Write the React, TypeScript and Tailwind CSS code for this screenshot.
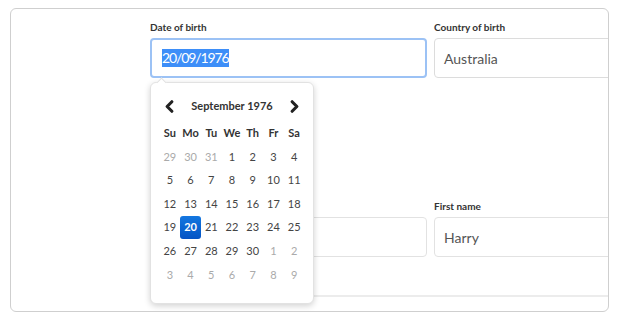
import { ChevronLeft, ChevronRight } from 'lucide-react';

const dayNames = ['Su', 'Mo', 'Tu', 'We', 'Th', 'Fr', 'Sa'];

// [day, inMonth]
const weeks: [number, boolean][][] = [
  [[29, false], [30, false], [31, false], [1, true], [2, true], [3, true], [4, true]],
  [[5, true], [6, true], [7, true], [8, true], [9, true], [10, true], [11, true]],
  [[12, true], [13, true], [14, true], [15, true], [16, true], [17, true], [18, true]],
  [[19, true], [20, true], [21, true], [22, true], [23, true], [24, true], [25, true]],
  [[26, true], [27, true], [28, true], [29, true], [30, true], [1, false], [2, false]],
  [[3, false], [4, false], [5, false], [6, false], [7, false], [8, false], [9, false]],
];

function Field({ label, children }: { label?: string; children: React.ReactNode }) {
  return (
    <div className="flex flex-col">
      <div className="h-[14px] text-[10px] font-bold leading-[14px] text-[#333]">{label}</div>
      <div className="mt-[4px]">{children}</div>
    </div>
  );
}

function DatePicker() {
  return (
    <div className="absolute left-[139px] top-[73px] w-[164px] h-[222px] rounded-[6px] border border-[#e2e2e2] bg-white px-[8.5px] pt-[11px] shadow-[0_2px_6px_rgba(0,0,0,0.18)]">
      {/* caret */}
      <div className="absolute -top-[4px] left-[7px] h-[7px] w-[7px] rotate-45 border-l border-t border-[#e2e2e2] bg-white" />
      <div className="flex h-[24px] items-center justify-between">
        <ChevronLeft size={19} strokeWidth={4} className="text-[#222]" />
        <span className="text-[11px] font-bold text-[#333]">September 1976</span>
        <ChevronRight size={19} strokeWidth={4} className="text-[#222]" />
      </div>
      <div className="mt-[3px] grid h-[24px] grid-cols-7 items-center">
        {dayNames.map((d) => (
          <span key={d} className="text-center text-[11px] font-bold text-[#333]">
            {d}
          </span>
        ))}
      </div>
      {weeks.map((week, wi) => (
        <div key={wi} className="grid h-[23.6px] grid-cols-7 items-center">
          {week.map(([day, inMonth], di) => {
            const selected = inMonth && day === 20;
            return (
              <div key={di} className="flex justify-center">
                {selected ? (
                  <span className="flex h-[23px] w-[22px] items-center justify-center rounded-[3px] bg-gradient-to-b from-[#1477e0] to-[#0553c4] text-[11px] font-bold text-white">
                    {day}
                  </span>
                ) : (
                  <span className={`text-[11px] ${inMonth ? 'text-[#444]' : 'text-[#aaa]'}`}>{day}</span>
                )}
              </div>
            );
          })}
        </div>
      ))}
    </div>
  );
}

export default function App() {
  return (
    <div className="h-[320px] w-[619px] bg-white pl-[10px] pt-[8px]" style={{ fontFamily: 'Lato, "Open Sans", sans-serif' }}>
      <div className="relative h-[304px] w-[599px] overflow-hidden rounded-[6px] border border-[#cfcfcf] bg-white pl-[139px] pt-[11px]">
        <div className="grid w-[561px] grid-cols-[277px_277px] gap-x-[7px]">
          <Field label="Date of birth">
            <div className="flex h-[40px] items-center rounded-[4px] border-2 border-[#9cc2f5] px-[10px]">
              <span className="bg-[#3d8ef8] text-[14px] leading-[18px] tracking-[-1.1px] text-white">20/09/1976</span>
            </div>
          </Field>
          <Field label="Country of birth">
            <div className="flex h-[40px] items-center rounded-[4px] border border-[#dcdcdc] px-[9px] text-[14px] text-[#555]">
              Australia
            </div>
          </Field>
        </div>

        <div className="mt-[121px] grid w-[561px] grid-cols-[277px_277px] gap-x-[7px]">
          <Field>
            <div className="h-[40px] rounded-[4px] border border-[#e2e2e2]" />
          </Field>
          <Field label="First name">
            <div className="flex h-[40px] items-center rounded-[4px] border border-[#e2e2e2] px-[9px] text-[14px] text-[#555]">
              Harry
            </div>
          </Field>
        </div>

        <div className="mt-[38px] h-[2px] w-[460px] bg-[#ececec]" />

        <DatePicker />
      </div>
    </div>
  );
}
